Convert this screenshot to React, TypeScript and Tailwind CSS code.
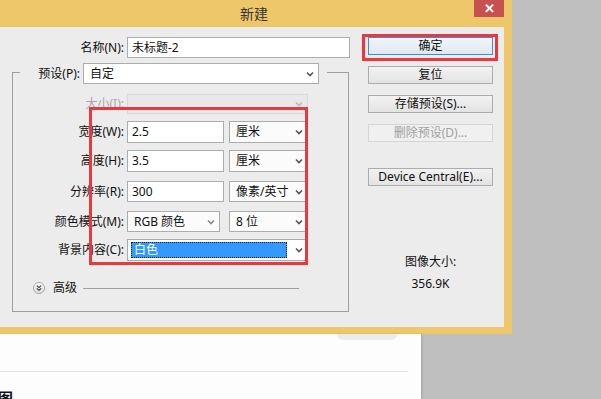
import React from 'react';

const FONT = "font-['Noto_Sans','Noto_Sans_CJK_SC',sans-serif]";

const Chevron = ({ color = '#555' }: { color?: string }) => (
  <svg width="8" height="6" viewBox="0 0 8 6" className="shrink-0">
    <path d="M1 1.5 L4 4.5 L7 1.5" fill="none" stroke={color} strokeWidth="1.6" />
  </svg>
);

const TextBox = ({ value, width }: { value: string; width: string }) => (
  <div className={`${width} h-full bg-white border border-[#abadb3] flex items-center pl-[4px] text-[12px] text-[#111]`}>
    {value}
  </div>
);

const Select = ({ value, width }: { value: string; width: string }) => (
  <div className={`${width} h-full bg-[#fbfbfb] border border-[#acacac] flex items-center pl-[6px] pr-[4px] text-[12px] text-[#111]`}>
    <span className="flex-1">{value}</span>
    <Chevron />
  </div>
);

const Row = ({ label, top, h, children, dim }: { label: string; top: string; h: string; children: React.ReactNode; dim?: boolean }) => (
  <div className={`flex items-center ${top} ${h}`}>
    <div className={`w-[111px] text-right text-[12px] ${dim ? 'text-[#a8a8a8]' : 'text-[#111]'}`}>{label}</div>
    <div className="ml-[3px] h-full flex gap-[5px]">{children}</div>
  </div>
);

const Button = ({ label, top, disabled }: { label: string; top: string; disabled?: boolean }) => (
  <div
    className={`${top} h-[18px] w-[125px] flex items-center justify-center text-[12px] border ${
      disabled
        ? 'border-[#d5d5d5] bg-[#f0f0f0] text-[#a0a0a0]'
        : 'border-[#acacac] bg-gradient-to-b from-[#f2f2f2] to-[#e3e3e3] text-[#111]'
    }`}
  >
    {label}
  </div>
);

export default function App() {
  return (
    <div className={`relative w-[601px] h-[399px] overflow-hidden bg-[#bfbfbf] ${FONT}`}>
      {/* dialog window */}
      <div className="w-[512px] border-r-[8px] border-b-[7px] border-[#efc76b] bg-[#ececec]">
        <div className="relative h-[27px] bg-[#efc76b] flex items-center justify-center">
          <span className="text-[14px] text-[#333] ml-[4px]">新建</span>
          <div className="absolute right-0 top-0 w-[30px] h-[17px] bg-[#c75050] flex items-center justify-center text-white text-[13px] font-bold leading-none">
            ✕
          </div>
        </div>

        <div className="flex h-[300px]">
          {/* left pane */}
          <div className="w-[368px]">
            <div className="mt-[10px] h-[21px] flex items-center">
              <div className="w-[124px] text-right text-[12px] text-[#111]">名称(N):</div>
              <div className="ml-[3px] h-full">
                <TextBox value="未标题-2" width="w-[223px]" />
              </div>
            </div>

            <div className="mt-[14px] ml-[12px] w-[337px] h-[240px] border border-[#a0a0a0]">
              <div className="-mt-[10px] ml-[7px] w-[307px] h-[21px] bg-[#ececec] flex items-center">
                <div className="w-[60px] text-right text-[12px] text-[#111]">预设(P):</div>
                <div className="ml-[3px] h-full w-[236px] bg-white border border-[#acacac] flex items-center pl-[6px] pr-[4px] text-[12px] text-[#111]">
                  <span className="flex-1">自定</span>
                  <Chevron />
                </div>
              </div>

              <Row label="大小(I):" top="mt-[10px]" h="h-[20px]" dim>
                <div className="w-[181px] h-full bg-[#e8e8e8] border border-[#d9d9d9] flex items-center justify-end pr-[4px]">
                  <Chevron color="#b8b8b8" />
                </div>
              </Row>
              <Row label="宽度(W):" top="mt-[7px]" h="h-[22px]">
                <TextBox value="2.5" width="w-[97px]" />
                <Select value="厘米" width="w-[79px]" />
              </Row>
              <Row label="高度(H):" top="mt-[7px]" h="h-[22px]">
                <TextBox value="3.5" width="w-[97px]" />
                <Select value="厘米" width="w-[79px]" />
              </Row>
              <Row label="分辨率(R):" top="mt-[9px]" h="h-[21px]">
                <TextBox value="300" width="w-[97px]" />
                <Select value="像素/英寸" width="w-[79px]" />
              </Row>
              <Row label="颜色模式(M):" top="mt-[9px]" h="h-[21px]">
                <div className="w-[93px] h-full bg-[#fbfbfb] border border-[#acacac] flex items-center pl-[6px] pr-[4px] text-[12px] text-[#111]">
                  <span className="flex-1">RGB 颜色</span>
                  <Chevron color="#888" />
                </div>
                <div className="ml-[4px] h-full">
                  <Select value="8 位" width="w-[79px]" />
                </div>
              </Row>
              <Row label="背景内容(C):" top="mt-[7px]" h="h-[22px]">
                <div className="w-[181px] h-full bg-white border border-[#acacac] flex items-center pl-[3px] pr-[4px]">
                  <div className="flex-1 h-[16px] bg-[#3399ff] border border-dotted border-[#222] text-white text-[12px] flex items-center pl-[2px]">
                    白色
                  </div>
                  <div className="ml-[8px]">
                    <Chevron />
                  </div>
                </div>
              </Row>

              <div className="mt-[20px] ml-[20px] h-[14px] flex items-center">
                <svg width="12" height="12" viewBox="0 0 12 12">
                  <defs>
                    <linearGradient id="g" x1="0" y1="0" x2="0" y2="1">
                      <stop offset="0" stopColor="#ffffff" />
                      <stop offset="1" stopColor="#dcdcdc" />
                    </linearGradient>
                  </defs>
                  <circle cx="6" cy="6" r="5.5" fill="url(#g)" stroke="#a5a5a5" />
                  <path d="M3.8 3.6 L6 5.6 L8.2 3.6 M3.8 6.3 L6 8.3 L8.2 6.3" fill="none" stroke="#333" strokeWidth="1.1" />
                </svg>
                <span className="ml-[8px] text-[12px] text-[#111]">高级</span>
                <div className="ml-[6px] w-[216px] h-px bg-[#a0a0a0]" />
              </div>
            </div>
          </div>

          {/* right column */}
          <div className="w-[125px] flex flex-col">
            <div className="mt-[10px] h-[18px] w-[125px] flex items-center justify-center text-[12px] text-[#111] border border-[#3c8fd6] bg-gradient-to-b from-[#f0f6fb] to-[#e0e8ef]">
              确定
            </div>
            <Button label="复位" top="mt-[11px]" />
            <Button label="存储预设(S)..." top="mt-[11px]" />
            <Button label="删除预设(D)..." top="mt-[11px]" disabled />
            <Button label="Device Central(E)..." top="mt-[26px]" />
            <div className="mt-[68px] h-[16px] leading-[16px] text-center text-[12px] text-[#111]">图像大小:</div>
            <div className="mt-[6px] h-[16px] leading-[16px] text-center text-[12px] text-[#111]">356.9K</div>
          </div>
        </div>
      </div>

      {/* page below the dialog */}
      <div className="relative w-[421px] h-[65px] bg-[#fdfdfd] shadow-[1px_0_2px_rgba(0,0,0,0.15)]">
        <div className="absolute left-[337px] top-0 w-[60px] h-[6px] rounded-b-[6px] bg-[#ececec]" />
        <div className="pt-[37px]">
          <div className="w-[408px] h-px bg-[#e2e2e2]" />
        </div>
        <div className="mt-[19px] -ml-[2px] text-[15px] font-bold text-[#111] leading-none">图</div>
      </div>

      {/* annotation boxes */}
      <div className="absolute left-[89px] top-[107px] w-[219px] h-[158px] border-[3px] border-[#e8393e]" />
      <div className="absolute left-[362px] top-[34px] w-[136px] h-[27px] border-[3px] border-[#e8393e]" />
    </div>
  );
}
